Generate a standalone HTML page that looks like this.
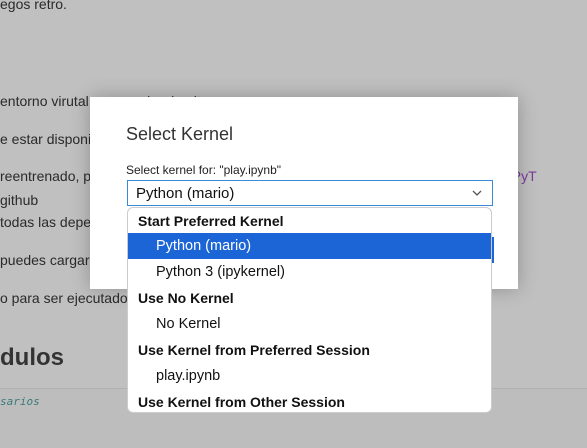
<!DOCTYPE html>
<html><head><meta charset="utf-8"><style>
*{margin:0;padding:0;box-sizing:border-box}
body{width:587px;height:448px;overflow:hidden;background:#c0c0c0;position:relative;font-family:"Liberation Sans",sans-serif;color:#2a2a2a}
.t{position:absolute;font-size:14px;white-space:nowrap;line-height:16px}
.dlg{position:absolute;left:90px;top:97px;width:428px;height:192px;background:#fff;box-shadow:0 0 18px rgba(0,0,0,.25)}
.sel{position:absolute;left:127px;top:180px;width:366px;height:26px;border:1px solid #3b8ad9;background:#fff;font-family:"Liberation Sans",sans-serif;font-size:15px;padding:4px 0 0 8px;color:#111}
.dd{position:absolute;left:127px;top:207px;width:365px;height:206px;background:#fff;border:1px solid #ccc;border-radius:6px;font-family:"Liberation Sans",sans-serif;font-size:14px;color:#111;overflow:hidden}
.r{position:absolute;left:0;width:100%;height:26px;line-height:26px;white-space:nowrap}
.h{font-weight:bold;padding-left:10px}
.i{padding-left:28px;font-size:14.5px}
</style></head><body>
<div class="t" style="left:0;top:-4px">egos retro.</div>
<div class="t" style="left:0;top:93px">entorno virutal con prueba de git</div>
<div class="t" style="left:0;top:131px">e estar disponib</div>
<div class="t" style="left:0;top:168px">reentrenado, pu</div>
<div class="t" style="left:464px;top:168px;color:#7a3a9a">RL con PyT</div>
<div class="t" style="left:0;top:192px">github</div>
<div class="t" style="left:0;top:214px">todas las deper</div>
<div class="t" style="left:462px;top:213px;background:#b5b5b5;font-family:'DejaVu Sans Mono',monospace;font-size:13px;padding:0 2px">torch</div>
<div class="t" style="left:507px;top:214px">.</div>
<div class="t" style="left:0;top:252px">puedes cargar el</div>
<div class="t" style="left:0;top:290px">o para ser ejecutado</div>
<div class="t" style="left:0;top:344px;font-size:24px;line-height:28px;font-weight:bold;color:#333">dulos</div>
<div style="position:absolute;left:0;top:388px;width:587px;height:60px;background:#bdbdbd;border-top:1px solid #b0b0b0"></div>
<div class="t" style="left:0;top:394px;font-style:italic;font-family:'DejaVu Sans Mono',monospace;font-size:11px;color:#3a7a7a">sarios</div>
<div class="dlg">
<div style="position:absolute;left:36px;top:27px;font-size:18px;color:#333">Select Kernel</div>
<div style="position:absolute;left:36px;top:66px;font-size:12px;color:#222">Select kernel for: "play.ipynb"</div>
<div style="position:absolute;left:308px;top:140px;width:96px;height:26px;background:#1c65d6"></div>
</div>
<div class="sel">Python (mario)<svg style="position:absolute;right:10px;top:9px" width="10" height="6"><path d="M1 1 L5 5 L9 1" stroke="#555" stroke-width="1.3" fill="none"/></svg></div>
<div class="dd">
<div class="r h" style="top:0">Start Preferred Kernel</div>
<div class="r i" style="top:25px;background:#1c65d6;color:#fff">Python (mario)</div>
<div class="r i" style="top:51px">Python 3 (ipykernel)</div>
<div class="r h" style="top:77px">Use No Kernel</div>
<div class="r i" style="top:103px">No Kernel</div>
<div class="r h" style="top:129px">Use Kernel from Preferred Session</div>
<div class="r i" style="top:155px">play.ipynb</div>
<div class="r h" style="top:181px">Use Kernel from Other Session</div>
</div>
</body></html>
